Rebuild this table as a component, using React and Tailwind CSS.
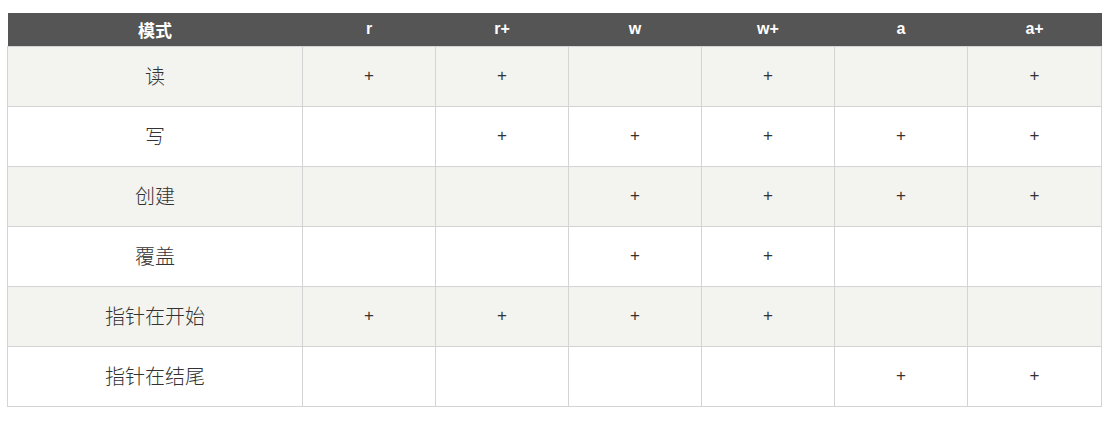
import React from "react";

const cols = ["r", "r+", "w", "w+", "a", "a+"];

const rows = [
  { label: "读", marks: [1, 1, 0, 1, 0, 1] },
  { label: "写", marks: [0, 1, 1, 1, 1, 1] },
  { label: "创建", marks: [0, 0, 1, 1, 1, 1] },
  { label: "覆盖", marks: [0, 0, 1, 1, 0, 0] },
  { label: "指针在开始", marks: [1, 1, 1, 1, 0, 0] },
  { label: "指针在结尾", marks: [0, 0, 0, 0, 1, 1] },
];

export default function App() {
  return (
    <div className="min-h-screen bg-white pt-[13px] pl-[7px] font-['Liberation_Sans','Noto_Sans_CJK_SC',sans-serif] text-[#333]">
      <table className="w-[1095px] table-fixed border-collapse">
        <colgroup>
          <col className="w-[295px]" />
          <col className="w-[133px]" />
          <col className="w-[133px]" />
          <col className="w-[133px]" />
          <col className="w-[133px]" />
          <col className="w-[133px]" />
          <col />
        </colgroup>
        <thead>
          <tr className="h-[33px] bg-[#555555] text-white">
            <th className="text-[17px] font-bold font-['Noto_Sans_CJK_SC',sans-serif]">模式</th>
            {cols.map((c) => (
              <th key={c} className="text-[16px] font-bold">{c}</th>
            ))}
          </tr>
        </thead>
        <tbody>
          {rows.map((row, i) => (
            <tr key={row.label} className={`h-[60px] ${i % 2 === 0 ? "bg-[#f3f3f0]" : "bg-white"}`}>
              <td className="border border-[#d4d4d4] text-center text-[20px] font-light font-['Noto_Sans_CJK_SC',sans-serif]">{row.label}</td>
              {row.marks.map((m, j) => (
                <td key={j} className="border border-[#d4d4d4] text-center text-[17px]">
                  {m ? "+" : ""}
                </td>
              ))}
            </tr>
          ))}
        </tbody>
      </table>
    </div>
  );
}
